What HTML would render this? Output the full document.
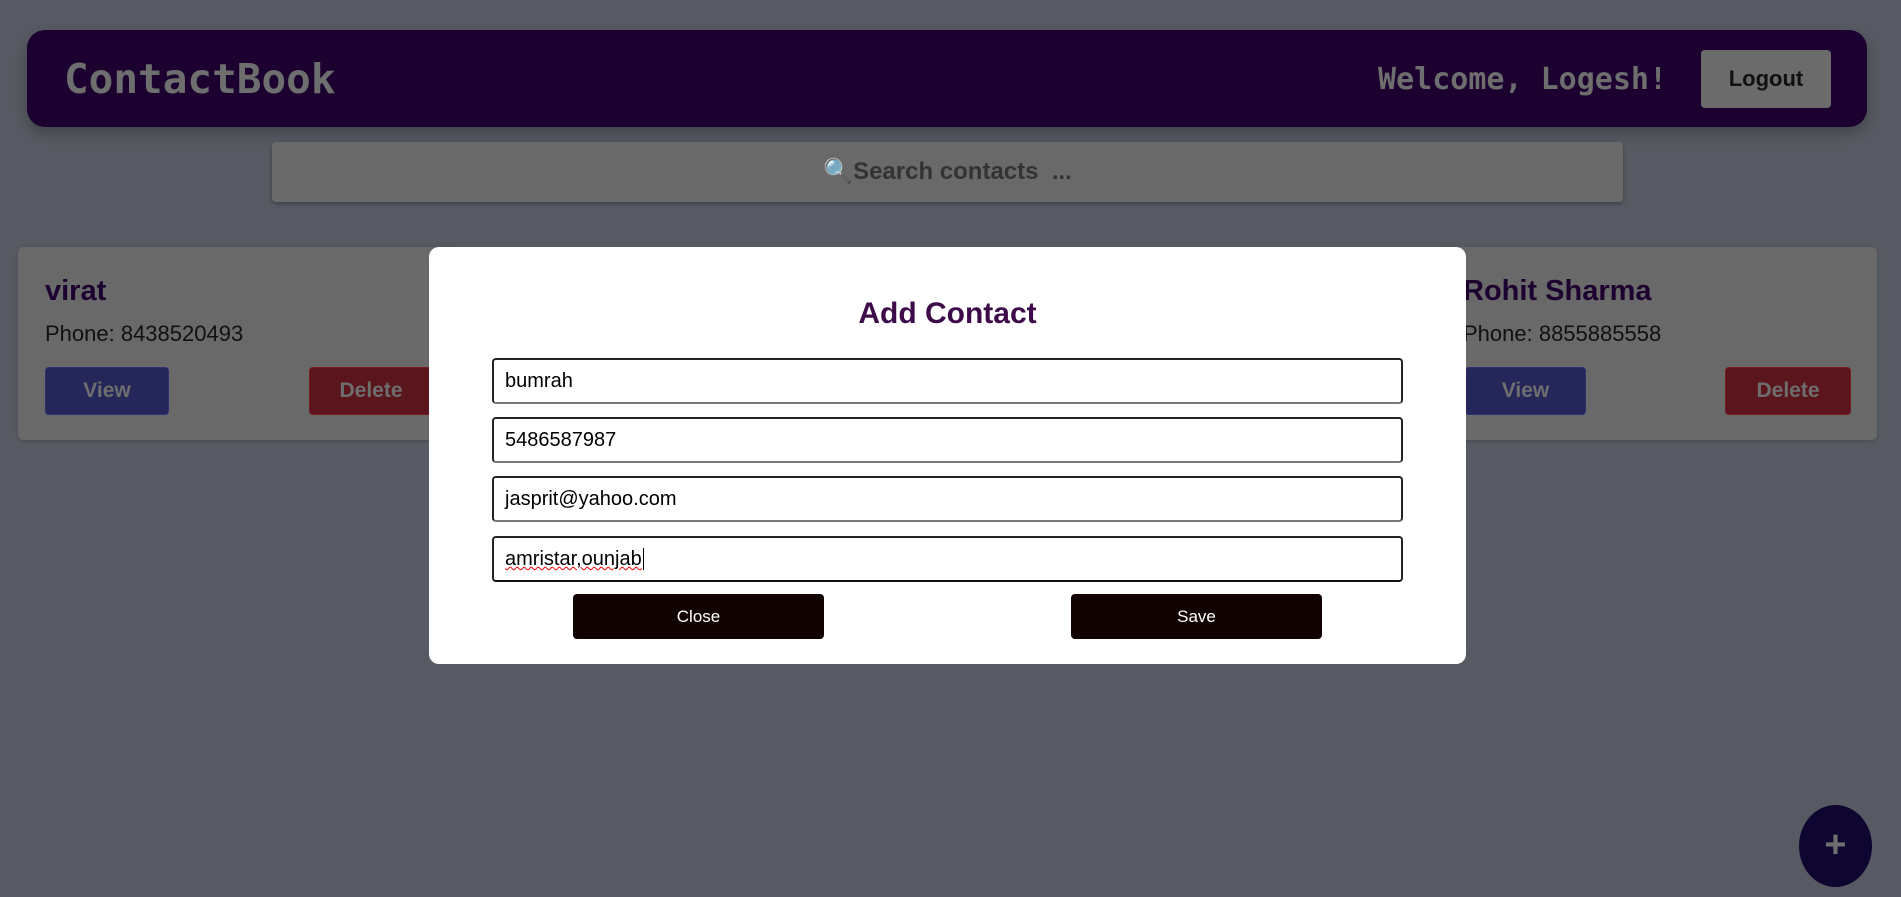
<!DOCTYPE html>
<html><head><meta charset="utf-8"><style>
*{box-sizing:border-box;margin:0;padding:0}
body{width:1901px;height:897px;background:#575a62;position:relative;overflow:hidden;font-family:"Liberation Sans",sans-serif}
.abs{position:absolute}
.hdr{left:27px;top:30px;width:1840px;height:97px;background:#1c0030;border-radius:18px;box-shadow:0 6px 14px rgba(0,0,0,.25)}
.mono{font-family:"DejaVu Sans Mono","Liberation Mono",monospace;font-weight:bold;color:#6e6e6e}
.logo{left:64px;top:55px;font-size:41px}
.wel{right:234px;top:62px;font-size:30px}
.logout{left:1701px;top:50px;width:130px;height:58px;background:#6b6b6b;border-radius:4px;color:#111;font-weight:bold;font-size:22px;text-align:center;line-height:58px}
.search{left:272px;top:142px;width:1351px;height:60px;background:#696969;border-radius:4px;box-shadow:0 2px 4px rgba(0,0,0,.3);text-align:center;line-height:60px;font-weight:bold;font-size:24px;color:#333}
.card{top:247px;height:193px;width:441px;background:#696969;border-radius:5px;box-shadow:0 1px 4px rgba(0,0,0,.2)}
.nm{font-weight:bold;font-size:29px;color:#1c0030;top:28px}
.ph{font-size:22px;color:#111;top:74px}
.btn{top:120px;height:48px;width:124px;border-radius:4px;color:#6e6e6e;font-weight:bold;font-size:21px;text-align:center;line-height:46px}
.v{background:#25275a;border:1px solid #2c2f70}.d{background:#5a151d;border:1px solid #7a1a22}
.modal{left:429px;top:247px;width:1037px;height:417px;background:#fff;border-radius:10px}
.title{left:0;width:100%;top:50px;text-align:center;font-weight:bold;font-size:30px;color:#3d0a4a}
.inp{left:63px;width:911px;height:46px;border:2px solid #222;border-bottom-color:#777;border-radius:4px;font-size:20px;line-height:42px;padding-left:11px;color:#000}
.mb{top:347px;width:251px;height:45px;background:#120303;border-radius:4px;color:#fff;font-size:17px;text-align:center;line-height:45px}
.fab{left:1799px;top:805px;width:73px;height:82px;border-radius:50%;background:#0e0530;color:#6e6e6e;font-size:38px;font-weight:bold;text-align:center;line-height:80px}
</style></head><body>
<div class="abs hdr"></div>
<div class="abs mono logo">ContactBook</div>
<div class="abs mono wel">Welcome, Logesh!</div>
<div class="abs logout">Logout</div>
<div class="abs search"><span style="color:#1a5a8a">&#x1F50D;</span>Search contacts&nbsp; ...</div>
<div class="abs card" style="left:18px">
 <div class="abs nm" style="left:27px">virat</div>
 <div class="abs ph" style="left:27px">Phone: 8438520493</div>
 <div class="abs btn v" style="left:27px">View</div>
 <div class="abs btn d" style="left:291px">Delete</div>
</div>
<div class="abs card" style="left:1436px">
 <div class="abs nm" style="left:27px">Rohit Sharma</div>
 <div class="abs ph" style="left:27px">Phone: 8855885558</div>
 <div class="abs btn v" style="left:29px;width:121px">View</div>
 <div class="abs btn d" style="left:289px;width:126px">Delete</div>
</div>
<div class="abs modal">
 <div class="abs title">Add Contact</div>
 <div class="abs inp" style="top:111px">bumrah</div>
 <div class="abs inp" style="top:170px">5486587987</div>
 <div class="abs inp" style="top:229px">jasprit@yahoo.com</div>
 <div class="abs inp" style="top:289px;border-bottom-color:#111"><span style="text-decoration:underline wavy red;text-decoration-thickness:1px">amristar,ounjab</span><span style="border-left:1px solid #000;margin-left:1px"></span></div>
 <div class="abs mb" style="left:144px">Close</div>
 <div class="abs mb" style="left:642px">Save</div>
</div>
<div class="abs fab">+</div>
</body></html>
